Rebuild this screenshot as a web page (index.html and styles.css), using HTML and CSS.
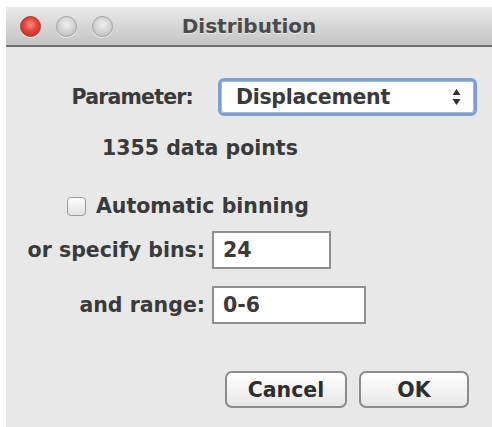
FILE: index.html
```html
<!DOCTYPE html>
<html>
<head>
<meta charset="utf-8">
<title>Distribution</title>
<link rel="stylesheet" href="styles.css">
</head>
<body>
<div class="window">
  <div class="titlebar">
    <div class="lights">
      <span class="light close"></span>
      <span class="light"></span>
      <span class="light"></span>
    </div>
    <div class="title">Distribution</div>
    <div></div>
  </div>
  <div class="content">
    <div class="param-row">
      <span class="label">Parameter:</span>
      <div class="popup">
        <span>Displacement</span>
        <svg class="stepper" width="9" height="18" viewBox="0 0 9 18">
          <path d="M4.5 1 L8.5 7 L0.5 7 Z" fill="#2e2e2e"/>
          <path d="M4.5 17 L8.5 11 L0.5 11 Z" fill="#2e2e2e"/>
        </svg>
      </div>
    </div>
    <div class="count">1355 data points</div>
    <label class="check-row">
      <span class="checkbox"></span>
      <span>Automatic binning</span>
    </label>
    <div class="field-row first">
      <span class="field-label">or specify bins:</span>
      <div class="input bins">24</div>
    </div>
    <div class="field-row">
      <span class="field-label">and range:</span>
      <div class="input range">0-6</div>
    </div>
    <div class="buttons">
      <button class="btn cancel">Cancel</button>
      <button class="btn ok">OK</button>
    </div>
  </div>
</div>
</body>
</html>
```
FILE: styles.css
```css
html, body {
  margin: 0;
  padding: 0;
  background: #ffffff;
}

body {
  font-family: "DejaVu Sans", Verdana, sans-serif;
  font-weight: bold;
  font-size: 20.5px;
  color: #3a3a3a;
}

.window {
  margin: 7px 0 0 6px;
  width: 486px;
  height: 420px;
  background: #e8e8e8;
  display: flex;
  flex-direction: column;
  overflow: hidden;
}

/* title bar with the window controls */
.titlebar {
  height: 38px;
  border-bottom: 2px solid #707070;
  background: linear-gradient(#ebebeb, #d6d6d6 50%, #c4c4c4);
  display: grid;
  grid-template-columns: 1fr auto 1fr;
  align-items: center;
}

.lights {
  display: flex;
  gap: 15px;
  padding-left: 14px;
}

.light {
  width: 21px;
  height: 21px;
  border-radius: 50%;
  box-sizing: border-box;
  border: 1px solid #a0a0a0;
  background: radial-gradient(circle at 50% 40%, #efefef 0%, #d6d6d6 45%, #b8b8b8 100%);
  box-shadow: 0 1px 0 rgba(255, 255, 255, 0.7);
}

.light.close {
  border-color: #a8342c;
  background: radial-gradient(circle at 50% 40%, #ff8a7e 0%, #e2433b 45%, #b82a22 100%);
}

.title {
  font-size: 20px;
  color: #4a4a4a;
  text-shadow: 0 1px 0 rgba(255, 255, 255, 0.6);
}

.content {
  display: flex;
  flex-direction: column;
}

/* parameter popup */
.param-row {
  display: flex;
  align-items: center;
  gap: 25px;
  margin-top: 31px;
}

.param-row .label {
  width: 187px;
  text-align: right;
  letter-spacing: -0.8px;
}

.popup {
  width: 259px;
  height: 38px;
  box-sizing: border-box;
  border: 3px solid #7aa0d4;
  border-radius: 6px;
  background: #ffffff;
  display: flex;
  align-items: center;
  justify-content: space-between;
  padding: 0 13px 0 15px;
  box-shadow: inset 0 0 0 1px #a9b9cc;
}

.popup span {
  letter-spacing: -0.3px;
}

.stepper {
  display: block;
}

.count {
  margin-top: 20px;
  padding-left: 96px;
  line-height: 24px;
}

/* automatic binning checkbox */
.check-row {
  display: flex;
  align-items: center;
  gap: 10px;
  padding-left: 61px;
  margin-top: 34px;
  line-height: 24px;
}

.checkbox {
  width: 19px;
  height: 19px;
  box-sizing: border-box;
  border: 1px solid #9a9a9a;
  border-radius: 4px;
  background: linear-gradient(#fdfdfd, #e2e2e2);
}

/* bins / range fields */
.field-row {
  display: flex;
  align-items: center;
  gap: 7px;
  margin-top: 17px;
}

.field-row.first {
  margin-top: 13px;
}

.field-label {
  width: 199px;
  text-align: right;
}

.input {
  height: 38px;
  box-sizing: border-box;
  border: 2px solid #8f8f8f;
  background: #ffffff;
  display: flex;
  align-items: center;
  padding-left: 9px;
}

.input.bins {
  width: 119px;
}

.input.range {
  width: 154px;
}

/* dialog buttons */
.buttons {
  display: flex;
  justify-content: flex-end;
  gap: 12px;
  padding-right: 23px;
  margin-top: 47px;
}

.btn {
  height: 37px;
  box-sizing: border-box;
  border: 2px solid #8b8b8b;
  border-radius: 7px;
  background: linear-gradient(#ffffff, #f1f1f1 60%, #e6e6e6);
  font: inherit;
  color: #2e2e2e;
  padding: 0;
}

.btn.cancel {
  width: 122px;
}

.btn.ok {
  width: 110px;
}
```
